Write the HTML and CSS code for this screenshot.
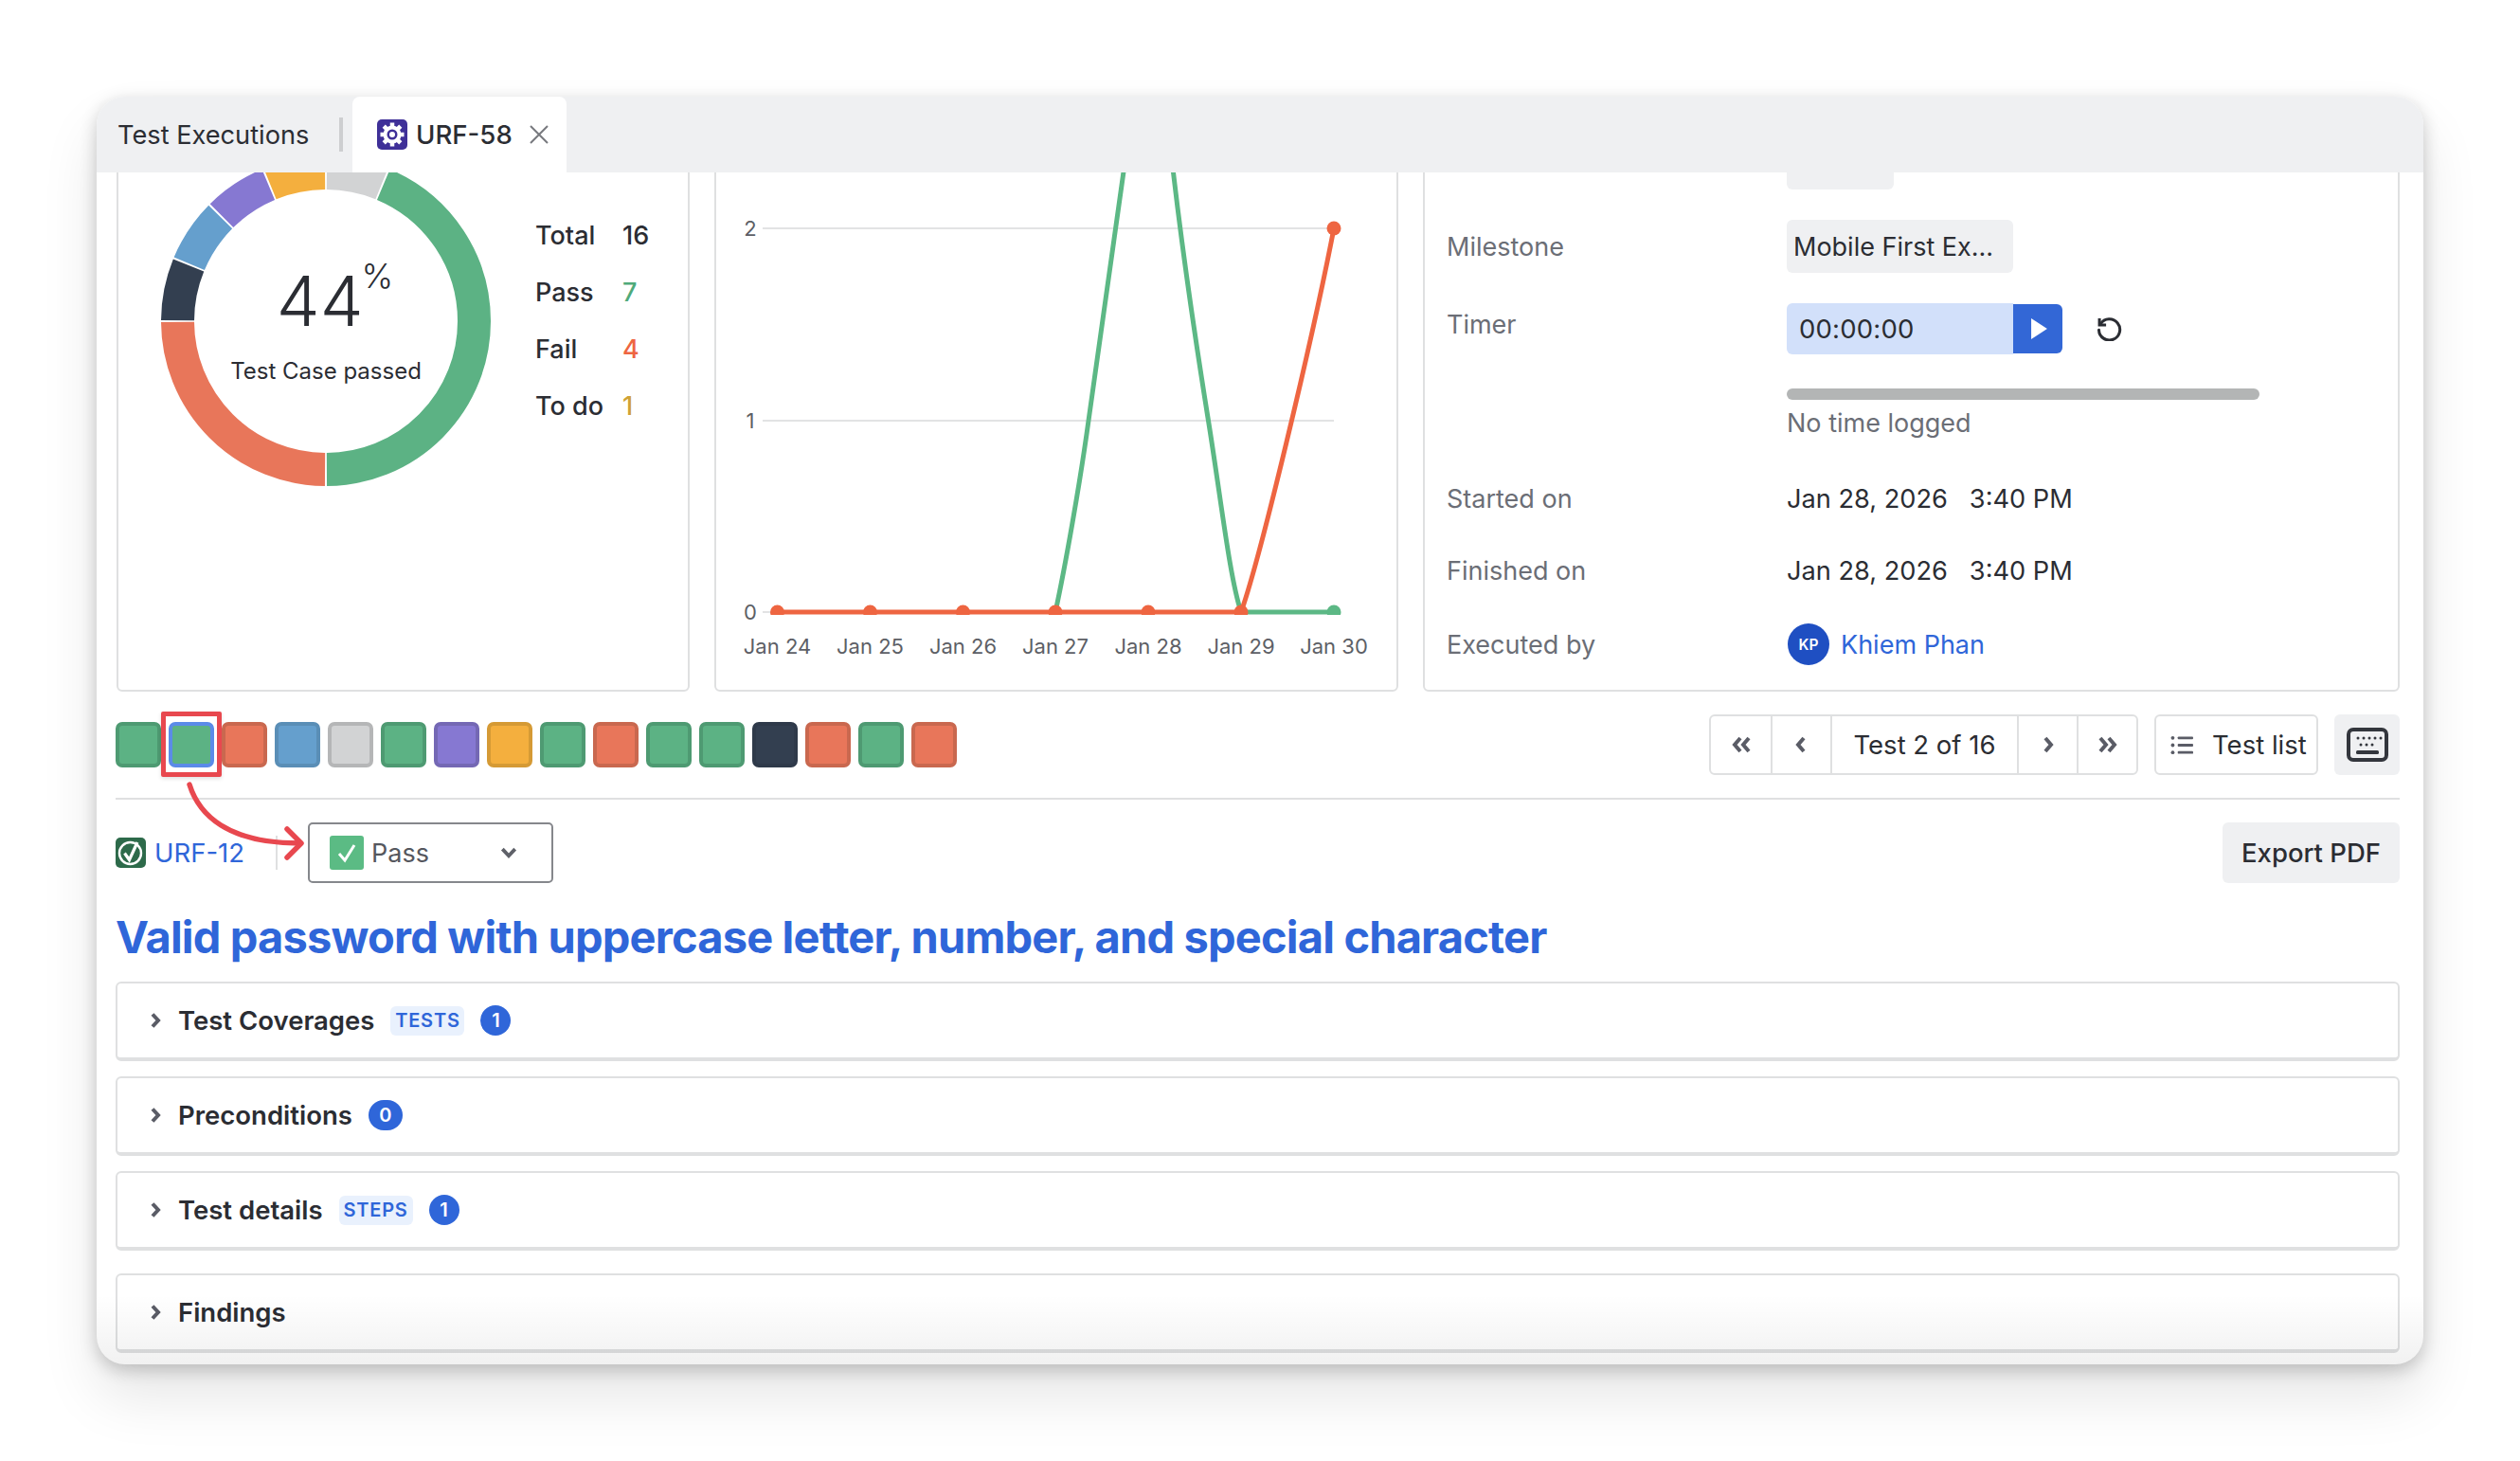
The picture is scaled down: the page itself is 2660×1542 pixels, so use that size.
FILE: index.html
```html
<!DOCTYPE html>
<html lang="en">
<head>
<meta charset="utf-8">
<title>URF-58</title>
<link rel="stylesheet" href="styles.css">
</head>
<body>
<div class="window">
  <div class="tabbar">
    <div class="tab-plain">Test Executions</div>
    <div class="tab-sep"></div>
    <div class="tab-active">
      <svg class="gear" viewBox="0 0 32 32"><rect width="32" height="32" rx="5" fill="#3f3098"/><g stroke="#fff" stroke-width="4.500" stroke-linecap="butt"><path d="M16 3.500v25M3.500 16h25M7.200 7.200l17.600 17.600M24.800 7.200L7.200 24.800"/></g><circle cx="16" cy="16" r="9.500" fill="#fff"/><circle cx="16" cy="16" r="5.500" fill="#3f3098"/><circle cx="16" cy="16" r="3" fill="#fff"/></svg>
      <span class="tab-name">URF-58</span>
      <svg class="tab-x" viewBox="0 0 22 22"><path d="M2 2l18 18M20 2L2 20" stroke="#77797e" stroke-width="2" fill="none"/></svg>
    </div>
  </div>
  <div class="scroller">
    <div class="scrolled">
      <section class="cards">
        <div class="card card-donut">
          <div class="donut">
            <svg viewBox="0 0 348 348" class="donut-svg">
              <g fill="none" stroke-width="35" transform="rotate(-90 174 174)">
                <circle cx="174" cy="174" r="156.500" pathLength="360" stroke="#d2d3d4" stroke-dasharray="21.800 338.200" stroke-dashoffset="-0.350"/>
                <circle cx="174" cy="174" r="156.500" pathLength="360" stroke="#5cb284" stroke-dasharray="156.800 203.200" stroke-dashoffset="-22.850"/>
                <circle cx="174" cy="174" r="156.500" pathLength="360" stroke="#e8765a" stroke-dasharray="89.300 270.700" stroke-dashoffset="-180.350"/>
                <circle cx="174" cy="174" r="156.500" pathLength="360" stroke="#333f50" stroke-dasharray="21.800 338.200" stroke-dashoffset="-270.350"/>
                <circle cx="174" cy="174" r="156.500" pathLength="360" stroke="#659fcd" stroke-dasharray="21.800 338.200" stroke-dashoffset="-292.850"/>
                <circle cx="174" cy="174" r="156.500" pathLength="360" stroke="#8678d2" stroke-dasharray="21.800 338.200" stroke-dashoffset="-315.350"/>
                <circle cx="174" cy="174" r="156.500" pathLength="360" stroke="#f4af3e" stroke-dasharray="21.800 338.200" stroke-dashoffset="-337.850"/>
              </g>
            </svg>
            <div class="donut-center">
              <div class="pct"><span class="pct-num">44</span><span class="pct-sign">%</span></div>
              <div class="pct-label">Test Case passed</div>
            </div>
          </div>
          <dl class="legend">
            <dt>Total</dt><dd>16</dd>
            <dt>Pass</dt><dd class="c-pass">7</dd>
            <dt>Fail</dt><dd class="c-fail">4</dd>
            <dt>To do</dt><dd class="c-todo">1</dd>
          </dl>
        </div>
        <div class="card card-chart">
          <svg class="chart" viewBox="756 124 720 604">
            <defs><clipPath id="plot"><rect x="756" y="100" width="720" height="549"/></clipPath></defs>
            <g stroke="#e2e3e4" stroke-width="2">
              <line x1="805" y1="241" x2="1408" y2="241"/>
              <line x1="805" y1="444" x2="1408" y2="444"/>
              <line x1="805" y1="646" x2="1408" y2="646"/>
            </g>
            <g class="axis">
              <text x="792" y="249" text-anchor="middle">2</text>
              <text x="792" y="452" text-anchor="middle">1</text>
              <text x="792" y="654" text-anchor="middle">0</text>
              <text x="820.500" y="690" text-anchor="middle">Jan 24</text>
              <text x="918.500" y="690" text-anchor="middle">Jan 25</text>
              <text x="1016.500" y="690" text-anchor="middle">Jan 26</text>
              <text x="1114" y="690" text-anchor="middle">Jan 27</text>
              <text x="1212" y="690" text-anchor="middle">Jan 28</text>
              <text x="1310" y="690" text-anchor="middle">Jan 29</text>
              <text x="1408" y="690" text-anchor="middle">Jan 30</text>
            </g>
            <g clip-path="url(#plot)">
              <path d="M1114 646C1124 600 1140 510 1149 444S1168 310 1189 160M1236 160C1246 250 1262 360 1275.500 444S1298 610 1310 646H1408" fill="none" stroke="#5cb885" stroke-width="5"/>
              <circle cx="1408" cy="646" r="7.500" fill="#5cb885"/>
              <path d="M820 646H1310C1330 590 1385 360 1408 241" fill="none" stroke="#ee6541" stroke-width="5"/>
              <g fill="#ee6541">
                <circle cx="820.500" cy="646" r="7.500"/><circle cx="918.500" cy="646" r="7.500"/><circle cx="1016.500" cy="646" r="7.500"/><circle cx="1114" cy="646" r="7.500"/><circle cx="1212" cy="646" r="7.500"/><circle cx="1310" cy="646" r="7.500"/><circle cx="1408" cy="241" r="7.500"/>
              </g>
            </g>
          </svg>
        </div>
        <div class="card card-meta">
          <div class="meta-row"><span class="meta-label"></span><span class="pill pill-short"></span></div>
          <div class="meta-row"><span class="meta-label">Milestone</span><span class="pill">Mobile First Ex...</span></div>
          <div class="meta-row meta-timer">
            <span class="meta-label timer-label">Timer</span>
            <div class="timer-col">
              <div class="timer-top">
                <span class="timer-input">00:00:00</span>
                <span class="timer-play"><svg viewBox="0 0 18 24" class="play"><path d="M1 1.500L17 12 1 22.500z" fill="#fff"/></svg></span>
                <svg class="reset" viewBox="0 0 24 24"><path d="M3.500 3.500v6h6" fill="none" stroke="#2b2d33" stroke-width="2.600"/><path d="M4.500 8.500A9.500 9.500 0 1 1 3 14" fill="none" stroke="#2b2d33" stroke-width="2.600" stroke-linecap="round"/></svg>
              </div>
              <div class="progress"></div>
              <div class="no-time">No time logged</div>
            </div>
          </div>
          <div class="meta-row"><span class="meta-label">Started on</span><span class="meta-value">Jan 28, 2026 &nbsp;&nbsp;3:40 PM</span></div>
          <div class="meta-row"><span class="meta-label">Finished on</span><span class="meta-value">Jan 28, 2026 &nbsp;&nbsp;3:40 PM</span></div>
          <div class="meta-row meta-user"><span class="meta-label">Executed by</span><span class="user"><span class="avatar">KP</span><span class="user-name">Khiem Phan</span></span></div>
        </div>
      </section>

      <section class="toolbar">
        <div class="squares">
          <span class="sq s-green"></span><span class="sq s-green current"></span><span class="sq s-red"></span><span class="sq s-blue"></span><span class="sq s-gray"></span><span class="sq s-green"></span><span class="sq s-purple"></span><span class="sq s-yellow"></span><span class="sq s-green"></span><span class="sq s-red"></span><span class="sq s-green"></span><span class="sq s-green"></span><span class="sq s-dark"></span><span class="sq s-red"></span><span class="sq s-green"></span><span class="sq s-red"></span>
        </div>
        <div class="tools">
          <div class="pager">
            <span class="pg pg-icon"><svg viewBox="0 0 24 24" class="ico"><path d="M11 5L5 12l6 7M20 5L14 12l6 7" class="chev"/></svg></span>
            <span class="pg pg-icon"><svg viewBox="0 0 24 24" class="ico"><path d="M14 5L8 12l6 7" class="chev"/></svg></span>
            <span class="pg pg-text">Test 2 of 16</span>
            <span class="pg pg-icon"><svg viewBox="0 0 24 24" class="ico"><path d="M9 5L15 12l-6 7" class="chev"/></svg></span>
            <span class="pg pg-icon"><svg viewBox="0 0 24 24" class="ico"><path d="M4 5L10 12l-6 7M13 5L19 12l-6 7" class="chev"/></svg></span>
          </div>
          <div class="testlist">
            <svg viewBox="0 0 26 24" class="list-ico"><g fill="#5a5c66"><circle cx="2.500" cy="4" r="2"/><circle cx="2.500" cy="12" r="2"/><circle cx="2.500" cy="20" r="2"/><rect x="8" y="2.500" width="17" height="3" rx="1"/><rect x="8" y="10.500" width="17" height="3" rx="1"/><rect x="8" y="18.500" width="17" height="3" rx="1"/></g></svg>
            <span>Test list</span>
          </div>
          <div class="kbd">
            <svg viewBox="0 0 44 36" class="kbd-ico"><rect x="2" y="2" width="40" height="32" rx="5" fill="none" stroke="#33363d" stroke-width="4"/><g fill="#33363d"><circle cx="12" cy="11" r="1.500"/><circle cx="18" cy="11" r="1.500"/><circle cx="24" cy="11" r="1.500"/><circle cx="30" cy="11" r="1.500"/><circle cx="36" cy="11" r="1.500"/><circle cx="15" cy="18" r="1.500"/><circle cx="21" cy="18" r="1.500"/><circle cx="27" cy="18" r="1.500"/><rect x="10" y="24" width="24" height="4" rx="1.500"/></g></svg>
          </div>
        </div>
      </section>

      <section class="status-row">
        <div class="status-left">
          <svg viewBox="0 0 32 32" class="issue-ico"><rect width="32" height="32" rx="5" fill="#2d6a4a"/><circle cx="15.500" cy="16.500" r="11.500" fill="none" stroke="#fff" stroke-width="2.400"/><path d="M9.500 16.500l5 7L23 5" fill="none" stroke="#fff" stroke-width="3.200"/></svg>
          <span class="issue-key">URF-12</span>
          <div class="select">
            <svg viewBox="0 0 36 36" class="check-ico"><rect width="36" height="36" rx="3" fill="#5bbb84"/><path d="M10 19l6 7L26 10" fill="none" stroke="#fff" stroke-width="3"/></svg>
            <span class="select-text">Pass</span>
            <svg viewBox="0 0 18 14" class="select-chev"><path d="M3 3.500l6 6.500 6-6.500" fill="none" stroke="#5f6169" stroke-width="3.400"/></svg>
          </div>
        </div>
        <div class="export">Export PDF</div>
      </section>

      <h1 class="title">Valid password with uppercase letter, number, and special character</h1>

      <section class="accordion">
        <div class="acc"><svg viewBox="0 0 12 18" class="acc-chev"><path d="M3 2.500L9 9l-6 6.500" class="chev"/></svg><span class="acc-title">Test Coverages</span><span class="chip">TESTS</span><span class="count">1</span></div>
        <div class="acc"><svg viewBox="0 0 12 18" class="acc-chev"><path d="M3 2.500L9 9l-6 6.500" class="chev"/></svg><span class="acc-title">Preconditions</span><span class="count count-wide">0</span></div>
        <div class="acc"><svg viewBox="0 0 12 18" class="acc-chev"><path d="M3 2.500L9 9l-6 6.500" class="chev"/></svg><span class="acc-title">Test details</span><span class="chip">STEPS</span><span class="count">1</span></div>
        <div class="acc acc-last"><svg viewBox="0 0 12 18" class="acc-chev"><path d="M3 2.500L9 9l-6 6.500" class="chev"/></svg><span class="acc-title">Findings</span></div>
      </section>
    </div>
    <svg class="arrow" viewBox="0 0 140 100"><path d="M10 8C20 40 50 70 126 70" fill="none" stroke="#e8484f" stroke-width="5.500" stroke-linecap="round"/><path d="M113 55L128 70 113 85" fill="none" stroke="#e8484f" stroke-width="5.500" stroke-linecap="round" stroke-linejoin="round"/></svg>
    <div class="fade"></div>
  </div>
</div>
</body>
</html>
```
FILE: styles.css
```css
* { box-sizing: border-box; }
html, body { margin: 0; padding: 0; background: #fff; }
body {
  width: 2660px;
  height: 1542px;
  padding: 102px;
  overflow: hidden;
  font-family: "Inter", "Liberation Sans", sans-serif;
  font-size: 27px;
  color: #2b2d33;
}
.window {
  width: 2456px;
  height: 1338px;
  background: #fff;
  border-radius: 30px;
  box-shadow: 0 34px 60px rgba(0,0,0,.10), 0 6px 18px rgba(0,0,0,.20);
  overflow: hidden;
  display: flex;
  flex-direction: column;
}
.tabbar {
  height: 80px;
  flex: none;
  background: #eff0f2;
  display: flex;
  align-items: stretch;
  position: relative;
  z-index: 2;
}
.tab-plain { display: flex; align-items: center; padding-left: 22px; width: 256px; font-size: 27.2px; }
.tab-sep { width: 4px; height: 36px; background: #cdced0; align-self: center; }
.tab-active {
  margin-left: 10px;
  width: 226px;
  background: #fff;
  border-radius: 8px 8px 0 0;
  display: flex;
  align-items: center;
  padding-left: 26px;
}
.gear { width: 32px; height: 32px; flex: none; }
.tab-name { margin-left: 9px; font-size: 27.600px; font-weight: 500; }
.tab-x { width: 22px; height: 22px; margin-left: 17px; flex: none; }

.scroller { position: relative; flex: 1; overflow: hidden; }
.scrolled { margin-top: -60px; padding: 0 25px 0 20px; }

.cards { display: flex; height: 608px; }
.card {
  border: 2px solid #dfe0e1;
  border-radius: 6px;
  background: #fff;
  height: 608px;
}
.card-donut { width: 605px; padding: 41px 0 0 45px; display: flex; margin-left: 1px; }
.card-chart { width: 722px; margin-left: 26px; }
.card-meta { width: 1031px; margin-left: 26px; padding: 22px 0 0 23px; display: flex; flex-direction: column; gap: 32px; }

.donut { position: relative; width: 348px; height: 348px; flex: none; }
.donut-svg { display: block; width: 348px; height: 348px; }
.donut-center { position: absolute; inset: 0; display: flex; flex-direction: column; align-items: center; padding-top: 108px; }
.pct { display: flex; align-items: flex-start; height: 90px; padding-left: 19px; }
.pct-num { font-size: 73px; font-weight: 300; line-height: 90px; color: #2b2d33; }
.pct-sign { font-size: 36px; font-weight: 300; line-height: 36px; margin-left: -2px; }
.pct-label { font-size: 24px; line-height: 30px; margin-top: 14px; }

.legend {
  margin: 53px 0 0 47px;
  display: grid;
  grid-template-columns: 92px auto;
  grid-auto-rows: 60px;
  align-items: center;
  font-size: 27px;
  font-weight: 500;
  align-self: start;
}
.legend dt, .legend dd { margin: 0; }
.c-pass { color: #4faa7a; }
.c-fail { color: #ee6541; }
.c-todo { color: #cfa235; }

.chart { display: block; width: 720px; height: 604px; }
.axis { font-size: 22px; fill: #5d5f66; font-family: "Inter", "Liberation Sans", sans-serif; }

.meta-row { display: flex; align-items: center; min-height: 44px; }
.meta-label { width: 359px; flex: none; color: #6b6e76; font-size: 27px; }
.meta-value { font-size: 27.200px; white-space: pre; }
.pill {
  width: 239px;
  height: 56px;
  background: #eff0f2;
  border-radius: 6px;
  display: flex;
  align-items: center;
  padding-left: 7px;
  font-size: 27px;
  white-space: nowrap;
}
.pill-short { width: 113px; height: 54px; }
.meta-timer { align-items: flex-start; margin-bottom: 8px; }
.meta-user { margin-top: 2px; }
.timer-label { line-height: 46px; }
.timer-col { display: flex; flex-direction: column; width: 499px; }
.timer-top { display: flex; align-items: center; height: 54px; }
.timer-input {
  width: 239px;
  height: 54px;
  background: #d2e0fa;
  border-radius: 6px 0 0 6px;
  padding-left: 13px;
  display: flex;
  align-items: center;
  font-size: 27.500px;
  letter-spacing: .2px;
}
.timer-play {
  width: 52px;
  height: 52px;
  background: #3367d6;
  border-radius: 0 6px 6px 0;
  display: flex;
  align-items: center;
  justify-content: center;
  padding-left: 2px;
}
.play { width: 19px; height: 26px; }
.reset { width: 28px; height: 28px; margin-left: 35px; margin-top: -2px; }
.progress { height: 12px; border-radius: 6px; background: #b3b5b5; margin-top: 36px; }
.no-time { color: #6b6e76; font-size: 27px; line-height: 34px; margin-top: 8px; }
.user { display: flex; align-items: center; margin-left: 1px; }
.avatar {
  width: 44px; height: 44px; border-radius: 50%;
  background: #1f4fc2; color: #fff; font-size: 15.500px; font-weight: 600;
  display: flex; align-items: center; justify-content: center;
}
.user-name { margin-left: 12px; color: #2f66d9; font-size: 27px; }

.toolbar { display: flex; justify-content: space-between; align-items: center; margin-top: 24px; height: 64px; }
.squares { display: flex; gap: 8px; }
.sq { width: 48px; height: 48px; border-radius: 7px; border: 4px solid; position: relative; display: block; }
.s-green { background: #5cb284; border-color: #4e9a72; }
.s-red { background: #e8765a; border-color: #c9684f; }
.s-blue { background: #659fcd; border-color: #5a8eb6; }
.s-gray { background: #d2d3d4; border-color: #b5b6b7; }
.s-purple { background: #8678d2; border-color: #7468b4; }
.s-yellow { background: #f4af3e; border-color: #d59a35; }
.s-dark { background: #333f50; border-color: #2f3a4a; }
.current { border-color: #5b8be8; }
.current::after {
  content: "";
  position: absolute;
  left: -12px; right: -12px; top: -15px; bottom: -14px;
  border: 5px solid #e8484f;
  border-radius: 2px;
  box-shadow: 0 2px 4px rgba(0,0,0,.12);
}
.tools { display: flex; align-items: center; }
.pager {
  display: flex;
  height: 64px;
  border: 2px solid #dfe0e1;
  border-radius: 6px;
  width: 453px;
}
.pg { display: flex; align-items: center; justify-content: center; }
.pg + .pg { border-left: 2px solid #dfe0e1; }
.pg-icon { width: 63px; flex: none; }
.pg-text { flex: 1; font-size: 27.500px; }
.ico { width: 24px; height: 24px; }
.chev { fill: none; stroke: #5a5c66; stroke-width: 4; }
.testlist {
  margin-left: 17px;
  width: 173px;
  height: 64px;
  border: 2px solid #dfe0e1;
  border-radius: 6px;
  display: flex;
  align-items: center;
  padding-left: 15px;
  gap: 19px;
  font-size: 27.500px;
}
.list-ico { width: 25px; height: 23px; flex: none; }
.kbd {
  margin-left: 17px;
  width: 69px;
  height: 64px;
  border-radius: 6px;
  background: #eff0f2;
  display: flex;
  align-items: center;
  justify-content: center;
}
.kbd-ico { width: 44px; height: 36px; }

.status-row {
  margin-top: 24px;
  padding-top: 24px;
  border-top: 2px solid #dfe0e1;
  display: flex;
  justify-content: space-between;
  align-items: center;
  box-sizing: content-box;
  height: 64px;
}
.status-left { display: flex; align-items: center; }
.issue-ico { width: 32px; height: 32px; flex: none; }
.issue-key { margin-left: 9px; color: #2f66d9; font-size: 27.500px; width: 162px; }
.select {
  width: 259px;
  height: 64px;
  border: 2px solid #85878c;
  border-radius: 5px;
  display: flex;
  align-items: center;
  padding-left: 21px;
  position: relative;
}
.select::before {
  content: "";
  position: absolute;
  left: -36px; top: 12px;
  width: 2px; height: 36px;
  background: #dfe0e1;
}
.check-ico { width: 36px; height: 36px; flex: none; }
.select-text { margin-left: 8px; font-size: 27px; color: #55575e; }
.select-chev { width: 20px; height: 16px; margin-left: 74px; }
.export {
  width: 187px;
  height: 64px;
  background: #eff0f2;
  border-radius: 6px;
  display: flex;
  align-items: center;
  justify-content: center;
  font-size: 27.500px;
  font-weight: 500;
}
.title {
  margin: 29px 0 0;
  height: 56px;
  line-height: 56px;
  font-size: 47px;
  font-weight: 700;
  letter-spacing: -.83px;
  color: #2f66d9;
  white-space: nowrap;
}
.accordion { margin-top: 19px; display: flex; flex-direction: column; gap: 16px; }
.acc {
  height: 84px;
  border: 2px solid #dfe0e1;
  border-bottom-width: 4px;
  border-radius: 6px;
  display: flex;
  align-items: center;
  padding: 0 0 0 34px;
}
.acc-last { margin-top: 8px; }
.acc-chev { width: 12px; height: 18px; flex: none; }
.acc-title { margin-left: 18px; font-size: 27.500px; font-weight: 600; }
.chip {
  margin-left: 17px;
  width: 78px;
  height: 31px;
  border-radius: 6px;
  background: #e9f1fd;
  color: #2f66d9;
  font-size: 20px;
  font-weight: 600;
  letter-spacing: .8px;
  display: flex;
  align-items: center;
  justify-content: center;
}
.count {
  margin-left: 17px;
  width: 32px;
  height: 32px;
  border-radius: 16px;
  background: #2f66d9;
  color: #fff;
  font-size: 20px;
  font-weight: 600;
  display: flex;
  align-items: center;
  justify-content: center;
}
.count-wide { width: 36px; }
.arrow { position: absolute; left: 88px; top: 638px; width: 140px; height: 100px; }
.fade {
  position: absolute;
  left: 0; right: 0; bottom: 0;
  height: 74px;
  background: linear-gradient(to bottom, rgba(0,0,0,0), rgba(0,0,0,.055));
  pointer-events: none;
}
```
